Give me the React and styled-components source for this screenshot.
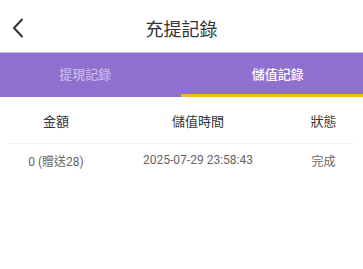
import styled, { createGlobalStyle } from "styled-components";

const GlobalStyle = createGlobalStyle`
	body {
		margin: 0;
		background: #fff;
		font-family: Roboto, "Noto Sans CJK TC", sans-serif;
	}
`;

const records = [
	{ amount: "0 (贈送28)", time: "2025-07-29 23:58:43", status: "完成" },
];

const App = () => {
	return (
		<>
			<GlobalStyle />
			<Page>
				<Header>
					<BackButton>
						<svg width="14" height="22" viewBox="0 0 14 22" fill="none">
							<path d="M11 2.5 L3 11 L11 19.5" stroke="#333" strokeWidth="2" strokeLinecap="round" strokeLinejoin="round" />
						</svg>
					</BackButton>
					<Title>充提記錄</Title>
				</Header>
				<Tabs>
					<Tab $pad="0 10px 0 0">提現記錄</Tab>
					<Tab $active $pad="0 0 0 12px">儲值記錄</Tab>
				</Tabs>
				<Table>
					<HeadRow>
						<HeadCell>金額</HeadCell>
						<HeadCell>儲值時間</HeadCell>
						<HeadCell>狀態</HeadCell>
					</HeadRow>
					{records.map((r, i) => (
						<Row key={i}>
							<Cell>{r.amount}</Cell>
							<Cell>{r.time}</Cell>
							<Cell>{r.status}</Cell>
						</Row>
					))}
				</Table>
			</Page>
		</>
	);
};

export default App;

const Page = styled.div`
	width: 363px;
	min-height: 269px;
	background: #fff;
`;

const Header = styled.div`
	position: relative;
	height: 52px;
	display: flex;
	align-items: center;
	justify-content: center;
	border-bottom: 1px solid #c7b6ec;
`;

const BackButton = styled.div`
	position: absolute;
	left: 11px;
	top: 17px;
	width: 14px;
	height: 22px;
`;

const Title = styled.div`
	font-size: 18px;
	color: #333;
	margin-top: 3px;
`;

const Tabs = styled.div`
	display: flex;
	height: 44px;
	background: #8f70cf;
`;

const Tab = styled.div`
	flex: 1;
	display: flex;
	align-items: center;
	justify-content: center;
	font-size: 13px;
	font-weight: 500;
	color: ${(p) => (p.$active ? "#fff" : "rgba(255,255,255,0.5)")};
	box-sizing: border-box;
	border-bottom: 3px solid ${(p) => (p.$active ? "#f5b722" : "transparent")};
	padding: ${(p) => p.$pad};
`;

const Table = styled.div`
	padding: 0 8px;
`;

const HeadRow = styled.div`
	display: grid;
	grid-template-columns: 96px 188px 1fr;
	height: 46px;
	align-items: center;
	border-bottom: 1px solid #f3f3f3;
`;

const HeadCell = styled.div`
	text-align: center;
	font-size: 13px;
	color: #333;
`;

const Row = styled.div`
	display: grid;
	grid-template-columns: 96px 188px 1fr;
	height: 32px;
	align-items: center;
`;

const Cell = styled.div`
	text-align: center;
	font-size: 12px;
	color: #666;
`;
